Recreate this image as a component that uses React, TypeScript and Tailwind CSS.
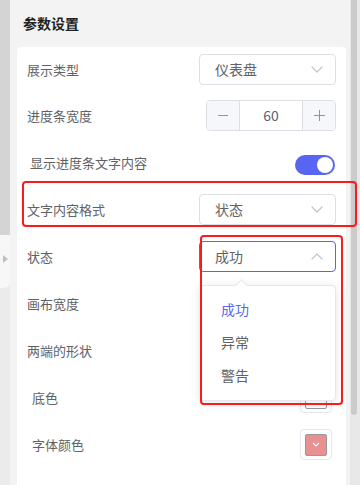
import type { ReactNode } from "react";

const font = { fontFamily: '"Noto Sans CJK SC", "Noto Sans", sans-serif' };

function Chevron({ up = false, color = "#c0c4cc" }: { up?: boolean; color?: string }) {
    return (
        <svg width="12" height="7" viewBox="0 0 12 7" fill="none">
            <polyline
                points={up ? "1,6 6,1 11,6" : "1,1 6,6 11,1"}
                stroke={color}
                strokeWidth="1.2"
                strokeLinecap="round"
                strokeLinejoin="round"
            />
        </svg>
    );
}

function Select({ value, open = false }: { value: string; open?: boolean }) {
    return (
        <div
            className={`flex h-[31px] w-[137px] items-center justify-between rounded-[4px] border bg-white pl-[15px] pr-[12px] text-[14px] text-[#606266] ${
                open ? "border-[#5865f2]" : "border-[#dcdfe6]"
            }`}
        >
            <span>{value}</span>
            <Chevron up={open} />
        </div>
    );
}

function Row({ label, h = "h-[47px]", pl = "pl-[10px]", children }: { label: string; h?: string; pl?: string; children?: ReactNode }) {
    return (
        <div className={`flex ${h} items-center justify-between ${pl} pr-[10px]`}>
            <span className="text-[13px] text-[#606266]">{label}</span>
            {children}
        </div>
    );
}

function Swatch({ color }: { color: string }) {
    return (
        <div className="mr-[4px] flex h-[31px] w-[32px] items-center justify-center rounded-[4px] border border-[#e4e7ed] bg-white">
            <div
                className="flex h-[22px] w-[22px] items-center justify-center rounded-[2px] border border-[#999999]"
                style={{ backgroundColor: color }}
            >
                <svg width="8" height="5" viewBox="0 0 8 5" fill="none">
                    <polyline points="1,1 4,4 7,1" stroke="#ffffff" strokeWidth="1.2" />
                </svg>
            </div>
        </div>
    );
}

export default function App() {
    return (
        <div className="relative flex h-[485px] w-[360px] overflow-hidden bg-[#ebebeb]" style={font}>
            {/* left collapse strip */}
            <div className="flex w-[10px] flex-col">
                <div className="h-[235px] bg-[#d4d4d4]" />
                <div className="flex h-[53px] items-start rounded-br-[6px] bg-[#f7f7f7] pt-[20px] pl-[3px]">
                    <div className="h-0 w-0 border-y-[4px] border-l-[5px] border-y-transparent border-l-[#c0c0c0]" />
                </div>
                <div className="flex-1 bg-[#ebebeb]" />
            </div>

            {/* panel */}
            <div className="flex flex-1 flex-col bg-[#f3f3f3]">
                <div className="flex h-[47px] items-center pl-[13px] text-[14px] font-bold text-[#1f1f1f]">参数设置</div>
                <div className="ml-[7px] mr-[4px] flex-1 rounded-t-[4px] bg-white">
                    <Row label="展示类型" h="h-[45px]">
                        <Select value="仪表盘" />
                    </Row>
                    <Row label="进度条宽度">
                        <div className="flex h-[31px] w-[130px] overflow-hidden rounded-[4px] border border-[#dcdfe6] text-[14px] text-[#606266]">
                            <div className="flex w-[33px] items-center justify-center border-r border-[#dcdfe6] bg-[#f5f7fa]">
                                <div className="h-[1px] w-[10px] bg-[#909399]" />
                            </div>
                            <div className="flex flex-1 items-center justify-center">60</div>
                            <div className="relative flex w-[33px] items-center justify-center border-l border-[#dcdfe6] bg-[#f5f7fa]">
                                <div className="h-[1px] w-[11px] bg-[#909399]" />
                                <div className="absolute h-[11px] w-[1px] bg-[#909399]" />
                            </div>
                        </div>
                    </Row>
                    <Row label="显示进度条文字内容" pl="pl-[13px]">
                        <div className="mr-[1px] mt-[5px] flex h-[20px] w-[40px] items-center justify-end rounded-full bg-[#5865f2] pr-[2px]">
                            <div className="h-[16px] w-[16px] rounded-full bg-white" />
                        </div>
                    </Row>
                    <Row label="文字内容格式">
                        <Select value="状态" />
                    </Row>
                    <Row label="状态">
                        <Select value="成功" open />
                    </Row>
                    <Row label="画布宽度" />
                    <Row label="两端的形状" />
                    <Row label="底色" pl="pl-[15px]">
                        <Swatch color="#ffffff" />
                    </Row>
                    <Row label="字体颜色" pl="pl-[15px]">
                        <Swatch color="#e99090" />
                    </Row>
                </div>
            </div>

            {/* scrollbar */}
            <div className="w-[10px] bg-[#e8e8e8]">
                <div className="ml-[1px] h-[415px] w-[6px] rounded-b-[3px] bg-[#cbcbcb]" />
            </div>

            {/* dropdown */}
            <div className="absolute left-[200px] top-[285px] h-[116px] w-[136px] rounded-[4px] border border-[#e4e7ed] bg-white pt-[7px] text-[14px] shadow-[0_2px_12px_rgba(0,0,0,0.1)]">
                <div className="absolute -top-[5px] left-[36px] h-[9px] w-[9px] rotate-45 border-l border-t border-[#e4e7ed] bg-white" />
                <div className="flex h-[33px] items-center pl-[20px] text-[#5865f2]">成功</div>
                <div className="flex h-[33px] items-center pl-[20px] text-[#606266]">异常</div>
                <div className="flex h-[33px] items-center pl-[20px] text-[#606266]">警告</div>
            </div>

            {/* annotation boxes */}
            <div className="absolute left-[22px] top-[181px] h-[46px] w-[335px] rounded-[4px] border-2 border-[#ff1a1a]" />
            <div className="absolute left-[200px] top-[235px] h-[170px] w-[143px] rounded-[4px] border-2 border-[#ff1a1a]" />
        </div>
    );
}
